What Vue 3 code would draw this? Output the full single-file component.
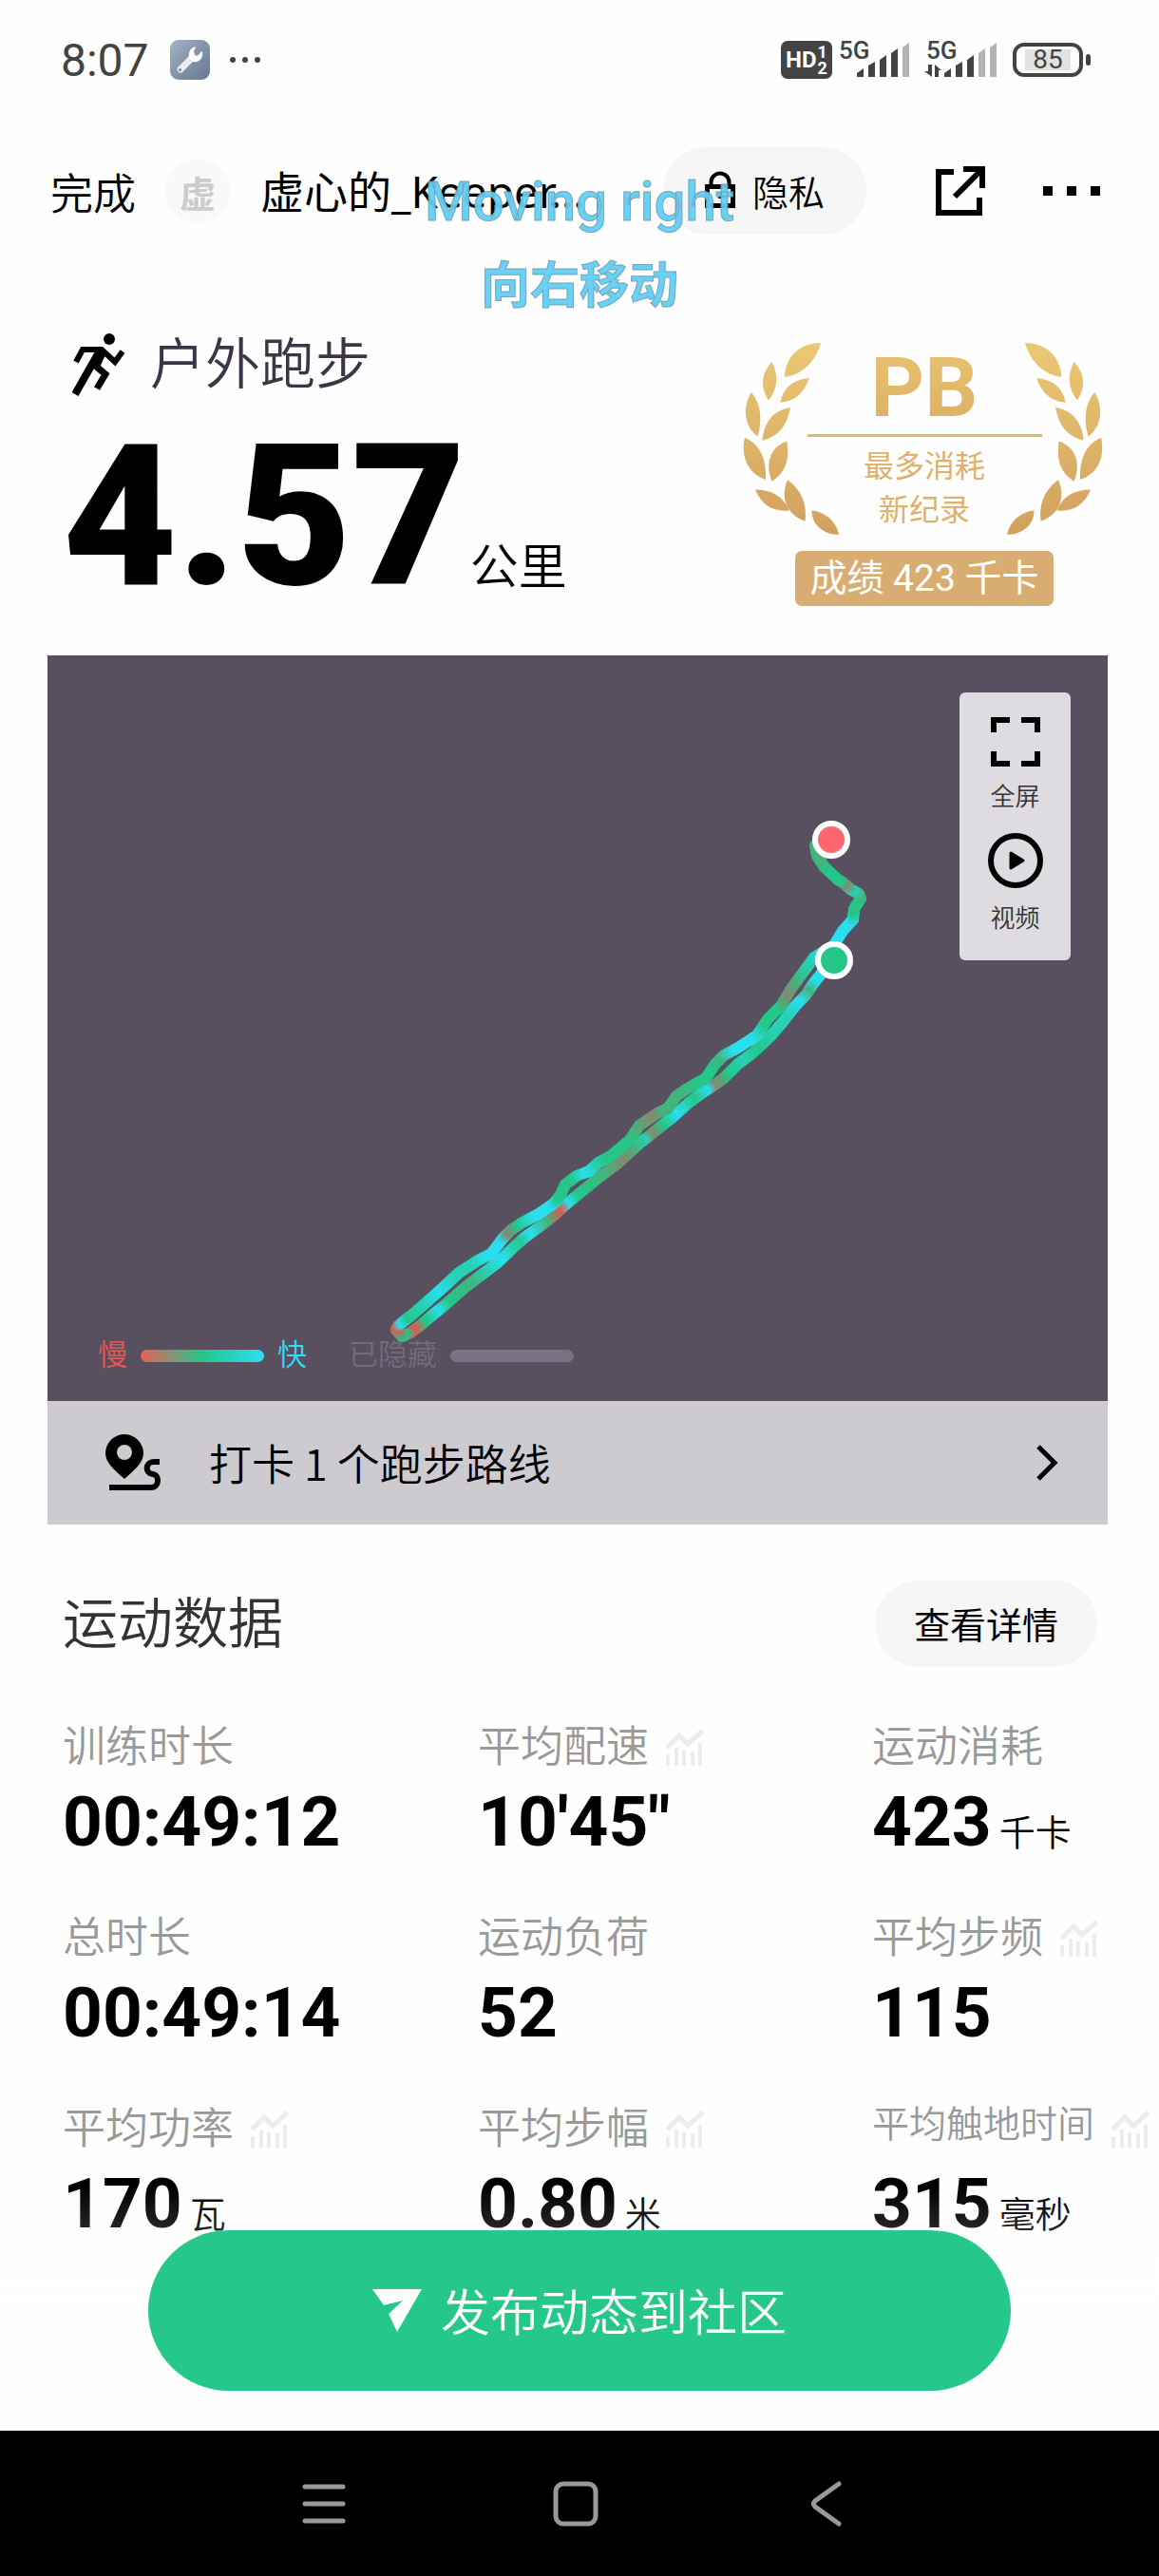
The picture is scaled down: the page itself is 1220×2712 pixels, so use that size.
<template>
  <div class="page">
    <div class="status">
      <div class="status-left">
        <span class="clock">8:07</span>
        <svg class="tool-icon" viewBox="0 0 42 42" width="42" height="42">
          <defs>
            <linearGradient id="toolBg" x1="0" y1="0" x2="1" y2="1">
              <stop offset="0" stop-color="#a3b2c4" />
              <stop offset="1" stop-color="#66788f" />
            </linearGradient>
          </defs>
          <rect width="42" height="42" rx="9" fill="url(#toolBg)" />
          <path d="M11 31L23 19" stroke="#e9edf1" stroke-width="7" stroke-linecap="round" />
          <path
            d="M27 7c-5 1-8 6-7 11 1 4 5 6 8 5 4-1 7-5 6-10l-1-1-4 5-3-1-1-4z"
            fill="#fff"
          />
          <circle cx="10.500" cy="31.500" r="1.500" fill="#71829a" />
        </svg>
        <svg viewBox="0 0 34 8" width="34" height="8" fill="#434343">
          <circle cx="4" cy="4" r="3" />
          <circle cx="17" cy="4" r="3" />
          <circle cx="30" cy="4" r="3" />
        </svg>
      </div>
      <div class="status-right">
        <div class="hd">
          <span>HD</span>
          <span class="hd-sims"><i>1</i><i>2</i></span>
        </div>
        <div v-for="sim in sims" :key="sim.id" class="signal">
          <span class="net">5G</span>
          <svg viewBox="0 0 78 40" width="78" height="40">
            <g v-if="sim.data" fill="#434343">
              <path d="M4 26h4v13L0 33h4zM11 39V26l7 6h-3v7z" />
            </g>
            <path
              v-for="(bar, i) in bars"
              :key="i"
              :d="bar"
              :fill="i < sim.level ? '#434343' : '#b3b3b3'"
            />
          </svg>
        </div>
        <div class="battery"><span>85</span></div>
      </div>
    </div>

    <header class="topbar">
      <button class="plain done">完成</button>
      <span class="avatar">虚</span>
      <span class="user">虚心的_Keeper...</span>
      <button class="privacy">
        <svg viewBox="0 0 32 40" width="32" height="40" fill="none" stroke="#000" stroke-width="5">
          <path d="M2.500 16.500h27v20h-27z" />
          <path d="M6.500 16v-4a9.500 9.500 0 0 1 19 0v4M16 22v7" stroke-width="4" />
        </svg>
        隐私
      </button>
      <button class="plain share" aria-label="分享">
        <svg viewBox="0 0 52 52" width="52" height="52" fill="none" stroke="#000" stroke-width="6">
          <path d="M19 6H3v43h43V33" />
          <path d="M29 3h20v20M48 4L20 32" />
        </svg>
      </button>
      <button class="plain more" aria-label="更多">
        <svg viewBox="0 0 60 10" width="60" height="10">
          <path d="M0 0h10v10H0zM25 0h10v10H25zM50 0h10v10H50z" />
        </svg>
      </button>
    </header>

    <div class="toast">
      <span class="toast-en">Moving right</span>
      <span class="toast-zh">向右移动</span>
    </div>

    <main>
      <section class="summary">
        <div>
          <h1>
            <svg viewBox="0 0 56 66" width="56" height="66" fill="none" stroke="#000" stroke-width="6">
              <circle cx="39" cy="6" r="6" fill="#000" stroke="none" />
              <path d="M4 30l7-13h20l14 13 8-11" />
              <path d="M28 20L3 64" stroke-width="8" />
              <path d="M32 17l-8 18" stroke-width="10" />
              <path d="M22 32l13 11-9 15" stroke-width="7" />
            </svg>
            户外跑步
          </h1>
          <p class="distance"><strong>4.57</strong><span>公里</span></p>
        </div>
        <div class="badge">
          <svg class="wreath" viewBox="0 0 1280 620" aria-hidden="true">
            <defs>
              <linearGradient id="gold" gradientUnits="userSpaceOnUse" x1="0" y1="60" x2="0" y2="680">
                <stop offset="0" stop-color="#ebc974" />
                <stop offset="1" stop-color="#d19f5f" />
              </linearGradient>
            </defs>
            <g transform="translate(0 -60)" fill="url(#gold)">
              <g><path v-for="leaf in leaves" :key="leaf" :d="leaf" /></g>
              <g transform="translate(1280 0) scale(-1 1)">
                <path v-for="leaf in leaves" :key="leaf" :d="leaf" />
              </g>
            </g>
          </svg>
          <div class="badge-text">
            <b>PB</b>
            <span>最多消耗</span>
            <span>新纪录</span>
          </div>
          <div class="record">成绩 423 千卡</div>
        </div>
      </section>

      <section class="map">
        <svg class="track" viewBox="0 0 1116 785">
          <g stroke-width="12" stroke-linecap="round">
            <line
              v-for="(s, i) in segments"
              :key="i"
              :x1="s.x1"
              :y1="s.y1"
              :x2="s.x2"
              :y2="s.y2"
              :stroke="s.color"
            />
          </g>
          <g stroke="#fff" stroke-width="6">
            <circle cx="825" cy="194" r="17" fill="#ff6670" />
            <circle cx="828" cy="321" r="17" fill="#24c789" />
          </g>
        </svg>
        <div class="map-tools">
          <button class="plain">
            <svg viewBox="0 0 52 52" width="52" height="52" fill="none" stroke="#000" stroke-width="6">
              <path d="M20 3H3v13M32 3h17v13M3 36v13h17M49 36v13H32" />
            </svg>
            全屏
          </button>
          <button class="plain">
            <svg viewBox="0 0 58 58" width="58" height="58">
              <circle cx="29" cy="29" r="26" fill="none" stroke="#000" stroke-width="6" />
              <path d="M24 21l13 8-13 8z" stroke="#000" stroke-width="3" stroke-linejoin="round" />
            </svg>
            视频
          </button>
        </div>
        <div class="legend">
          <span class="slow">慢</span>
          <i class="ramp"></i>
          <span class="fast">快</span>
          <span class="hidden">已隐藏</span>
          <i class="ramp off"></i>
        </div>
      </section>

      <a class="route" href="#">
        <svg viewBox="0 0 58 60" width="58" height="60">
          <path
            fill-rule="evenodd"
            d="M20 0C9 0 0 9 0 20c0 10 9 17 20 27 11-10 20-17 20-27C40 9 31 0 20 0zm0 11a8 8 0 1 1 0 16 8 8 0 0 1 0-16z"
          />
          <path
            d="M57 29h-6c-9 0-10 12-1 13 7 1 7 14-2 14H4"
            fill="none"
            stroke="#000"
            stroke-width="6"
          />
        </svg>
        <span>打卡 1 个跑步路线</span>
        <svg class="arrow" viewBox="0 0 24 40" width="24" height="40" fill="none" stroke="#000" stroke-width="5">
          <path d="M3 3l17 17L3 37" />
        </svg>
      </a>

      <section class="data">
        <div class="data-head">
          <h2>运动数据</h2>
          <button>查看详情</button>
        </div>
        <dl>
          <div v-for="item in stats" :key="item.label">
            <dt>
              <span :class="{ long: item.label.length > 4 }">{{ item.label }}</span>
              <svg v-if="item.chart" viewBox="0 0 40 40" width="40" height="40" fill="none" stroke="#ececec">
                <path d="M1 20L14 7l9 9L39 2" stroke-width="5" />
                <path d="M2 27v12M11 20v19M19 23v16M28 24v15M36 15v24" stroke-width="4" />
              </svg>
            </dt>
            <dd>{{ item.value }}<small v-if="item.unit">{{ item.unit }}</small></dd>
          </div>
        </dl>
      </section>
    </main>

    <footer class="dock">
      <div class="publish-wrap">
        <button class="publish">
          <svg viewBox="0 0 52 46" width="52" height="46" fill="#fff">
            <path d="M0 1h52L26 46l-9-19 15-14-20 5z" />
          </svg>
          发布动态到社区
        </button>
      </div>
      <nav>
        <button class="plain" aria-label="菜单">
          <svg viewBox="0 0 48 48" width="48" height="48">
            <path d="M4 6h40M4 24h40M4 42h40" />
          </svg>
        </button>
        <button class="plain" aria-label="主页">
          <svg viewBox="0 0 48 48" width="48" height="48">
            <rect x="3" y="3" width="42" height="42" rx="8" />
          </svg>
        </button>
        <button class="plain" aria-label="返回">
          <svg viewBox="0 0 48 48" width="48" height="48">
            <path d="M37 3L12 21q-3 3 0 6l25 18" />
          </svg>
        </button>
      </nav>
    </footer>
  </div>
</template>

<script setup>
const sims = [
  { id: 1, level: 4, data: false },
  { id: 2, level: 3, data: true }
]

const bars = [
  'M21 39v-4l7-5v9z',
  'M33 39V27l7-4v16z',
  'M45 39V21l7-5v23z',
  'M57 39V14l7-5v30z',
  'M69 39V8l7-5v36z'
]

const leaves = [
  'M318 66C250 66 206 110 203 174C262 165 300 125 318 66z',
  'M163 125C128 165 126 205 153 247C182 210 186 170 163 125z',
  'M281 178C235 180 200 205 190 254C235 252 265 225 281 178z',
  'M98 222C72 265 72 325 118 362C132 315 132 260 98 222z',
  'M222 270C170 278 138 315 133 374C185 360 210 330 222 270z',
  'M77 366C65 430 90 480 144 498C146 440 130 385 77 366z',
  'M211 376C155 395 142 450 163 503C212 470 218 430 211 376z',
  'M111 529C130 575 165 600 218 595C200 550 160 528 111 529z',
  'M213 498C190 550 205 605 268 629C275 570 255 530 213 498z',
  'M289 594C290 645 330 670 375 671C365 625 330 600 289 594z'
]

const stats = [
  { label: '训练时长', value: '00:49:12' },
  { label: '平均配速', value: '10′45″', chart: true },
  { label: '运动消耗', value: '423', unit: '千卡' },
  { label: '总时长', value: '00:49:14' },
  { label: '运动负荷', value: '52' },
  { label: '平均步频', value: '115', chart: true },
  { label: '平均功率', value: '170', unit: '瓦', chart: true },
  { label: '平均步幅', value: '0.80', unit: '米', chart: true },
  { label: '平均触地时间', value: '315', unit: '毫秒', chart: true }
]

// pace colours, slow to fast
const pace = {
  r: [226, 88, 80],
  b: [131, 138, 112],
  m: [68, 180, 125],
  g: [36, 199, 137],
  t: [40, 209, 180],
  c: [42, 222, 238]
}

const outbound = [
  [828, 321, 'c'], [817, 332, 'c'], [805, 347, 'c'], [798, 358, 'm'], [788, 368, 'c'],
  [773, 387, 't'], [760, 402, 't'], [743, 418, 'g'], [727, 430, 't'], [712, 445, 'g'],
  [698, 455, 'b'], [690, 460, 'c'], [675, 471, 'g'], [657, 487, 'c'], [643, 498, 'g'],
  [632, 507, 'b'], [625, 512, 't'], [613, 523, 'm'], [600, 535, 'b'], [580, 550, 'm'],
  [553, 572, 'g'], [543, 580, 'c'], [535, 588, 'r'], [520, 600, 'm'], [502, 613, 'c'],
  [492, 622, 'g'], [473, 640, 'c'], [457, 652, 't'], [440, 665, 'm'], [417, 685, 'g'],
  [407, 693, 'c'], [393, 705, 'g'], [382, 713, 'r'], [373, 717, 'g']
]

const inbound = [
  [373, 717, 'g'], [367, 710, 'b'], [369, 706, 'r'], [375, 701, 'c'], [383, 695, 'g'],
  [400, 680, 't'], [417, 665, 'c'], [433, 650, 't'], [453, 637, 't'], [467, 630, 'c'],
  [480, 613, 'c'], [488, 605, 'b'], [500, 597, 'g'], [517, 588, 'c'], [533, 577, 'c'],
  [540, 568, 'g'], [545, 557, 'g'], [557, 548, 'g'], [570, 543, 'c'], [580, 534, 't'],
  [593, 527, 'g'], [613, 510, 'g'], [623, 495, 'm'], [642, 482, 'b'], [653, 477, 'm'],
  [662, 464, 'm'], [672, 457, 'm'], [693, 445, 'g'], [703, 430, 'g'], [712, 421, 'm'],
  [727, 413, 'c'], [747, 400, 'c'], [758, 383, 'g'], [773, 368, 'g'], [782, 352, 'b'],
  [793, 337, 'm'], [807, 318, 't'], [828, 305, 'c'], [837, 290, 'c'], [848, 278, 'c'],
  [849, 267, 'g'], [856, 256, 'g'], [854, 251, 'm'], [845, 246, 't'], [837, 239, 'b'],
  [832, 236, 'g'], [818, 223, 'g'], [810, 211, 'm'], [808, 200, 'm']
]

const STEPS = 5

function colorize(points) {
  const out = []
  for (let i = 1; i < points.length; i++) {
    const [x1, y1, c1] = points[i - 1]
    const [x2, y2, c2] = points[i]
    for (let k = 0; k < STEPS; k++) {
      const a = k / STEPS
      const b = (k + 1) / STEPS
      const mix = pace[c1].map((v, n) => Math.round(v + (pace[c2][n] - v) * b))
      out.push({
        x1: x1 + (x2 - x1) * a,
        y1: y1 + (y2 - y1) * a,
        x2: x1 + (x2 - x1) * b,
        y2: y1 + (y2 - y1) * b,
        color: `rgb(${mix.join(',')})`
      })
    }
  }
  return out
}

const segments = [...colorize(outbound), ...colorize(inbound)]
</script>

<style>
body {
  margin: 0;
  background: #fefefe;
}
</style>

<style scoped>
.page {
  position: relative;
  min-height: 100vh;
  font-family: Roboto, "Noto Sans CJK SC", sans-serif;
  font-weight: 350;
  color: #000;
}

button {
  font: inherit;
  color: inherit;
  border: 0;
  margin: 0;
  cursor: pointer;
}

.plain {
  padding: 0;
  background: none;
}

svg {
  display: block;
  flex: none;
}

h1,
h2,
p,
dl,
dd {
  margin: 0;
  font-weight: inherit;
}

/* status bar */
.status {
  display: flex;
  justify-content: space-between;
  align-items: center;
  height: 126px;
  padding: 0 80px 0 64px;
  box-sizing: border-box;
  color: #434343;
}

.status-left,
.status-right {
  display: flex;
  align-items: center;
}

.clock {
  font-size: 48px;
  font-weight: 400;
}

.tool-icon {
  margin: 0 20px 0 22px;
}

.hd {
  display: flex;
  align-items: center;
  justify-content: center;
  gap: 1px;
  width: 54px;
  height: 40px;
  border-radius: 7px;
  background: #434343;
  color: #fff;
  font-size: 24px;
  font-weight: 700;
}

.hd-sims {
  display: flex;
  flex-direction: column;
  font-size: 18px;
  line-height: 17px;
}

.hd-sims i {
  font-style: normal;
}

.signal {
  position: relative;
  margin-left: 5px;
  padding-bottom: 2px;
}

.signal + .signal {
  margin-left: 14px;
}

.signal .net {
  position: absolute;
  left: 2px;
  top: -2px;
  font-size: 26px;
  line-height: 26px;
  font-weight: 500;
}

.battery {
  position: relative;
  margin-left: 15px;
  width: 74px;
  height: 36px;
  box-sizing: border-box;
  border: 4px solid #434343;
  border-radius: 12px;
  display: flex;
  align-items: center;
  justify-content: center;
  font-size: 28px;
  font-weight: 400;
}

.battery span {
  padding: 0 8px;
  line-height: 22px;
  background: #e2e2e2;
}

.battery::after {
  content: "";
  position: absolute;
  right: -12px;
  top: 8px;
  width: 5px;
  height: 12px;
  border-radius: 3px;
  background: #434343;
}

/* top bar */
.topbar {
  display: flex;
  align-items: center;
  height: 150px;
  padding: 0 62px 0 53px;
}

.done {
  font-size: 45px;
}

.avatar {
  display: grid;
  place-items: center;
  width: 68px;
  height: 68px;
  margin: 0 32px 0 31px;
  border-radius: 50%;
  background: #f9f9f9;
  color: #ccc;
  font-size: 38px;
  font-weight: 700;
}

.user {
  font-family: "Noto Sans", "Noto Sans CJK SC", sans-serif;
  font-size: 46px;
  line-height: 60px;
  font-weight: 400;
  white-space: nowrap;
}

.privacy {
  display: flex;
  align-items: center;
  justify-content: center;
  gap: 18px;
  width: 214px;
  height: 92px;
  padding: 0 0 2px;
  margin-left: auto;
  border-radius: 46px;
  background: #f6f6f6;
  font-size: 38px;
}

.share {
  margin: 0 61px 0 73px;
}

.toast {
  position: absolute;
  top: 168px;
  left: 0;
  right: 0;
  display: flex;
  flex-direction: column;
  align-items: center;
  color: #62cff5;
  font-weight: 500;
  opacity: 0.95;
  -webkit-text-stroke: 1px #6f9fb4;
  pointer-events: none;
}

.toast-en {
  font-size: 58px;
  line-height: 88px;
}

.toast-zh {
  font-size: 52px;
  line-height: 92px;
  font-weight: 700;
}

/* summary */
.summary {
  display: flex;
  justify-content: space-between;
  padding: 66px 58px 0 66px;
}

h1 {
  display: flex;
  align-items: center;
  gap: 26px;
  padding-left: 10px;
  font-size: 58px;
  line-height: 84px;
  color: #3d3545;
}

.distance {
  display: flex;
  align-items: baseline;
  gap: 4px;
  height: 230px;
  line-height: 236px;
}

.distance strong {
  font-size: 208px;
  font-weight: 900;
}

.distance span {
  font-size: 51px;
  line-height: 60px;
}

.badge {
  position: relative;
  display: flex;
  flex-direction: column;
  align-items: center;
  width: 378px;
  padding-top: 17px;
  color: #deb16d;
}

.wreath {
  position: absolute;
  top: 17px;
  left: -26px;
  width: 427px;
}

.badge-text {
  display: flex;
  flex-direction: column;
  align-items: center;
  font-size: 32px;
  line-height: 46px;
  font-weight: 400;
}

.badge-text b {
  width: 247px;
  margin-bottom: 8px;
  border-bottom: 3px solid #dfba67;
  text-align: center;
  font-size: 88px;
  line-height: 98px;
  font-weight: 700;
  background: linear-gradient(#e8c46f, #dcae67);
  -webkit-background-clip: text;
  background-clip: text;
  color: transparent;
}

.record {
  margin-top: 20px;
  padding: 0 15px;
  border-radius: 7px;
  background: #d9ad72;
  color: #fff;
  font-size: 39px;
  line-height: 58px;
  font-weight: 400;
}

/* map */
.map {
  position: relative;
  margin: 34px 54px 0 50px;
  background: #584f5f;
}

.track {
  width: 100%;
}

.map-tools {
  position: absolute;
  top: 39px;
  right: 39px;
  display: flex;
  flex-direction: column;
  gap: 18px;
  width: 117px;
  padding: 26px 0 24px;
  box-sizing: border-box;
  border-radius: 6px;
  background: #dedce0;
}

.map-tools button {
  display: flex;
  flex-direction: column;
  align-items: center;
  gap: 12px;
  font-size: 26px;
  line-height: 40px;
  color: #333;
}

.legend {
  position: absolute;
  left: 53px;
  bottom: 24px;
  display: flex;
  align-items: center;
  gap: 14px;
  font-size: 31px;
  line-height: 48px;
}

.slow {
  color: #e85555;
}

.fast {
  color: #35dcf5;
}

.hidden {
  margin-left: 30px;
  color: #746b7b;
}

.ramp {
  width: 130px;
  height: 13px;
  border-radius: 7px;
  background: linear-gradient(90deg, #ea5f58, #24c789 50%, #2fdcf7);
}

.ramp.off {
  background: #7a7182;
}

.route {
  display: flex;
  align-items: center;
  height: 130px;
  margin: 0 54px 0 50px;
  padding: 0 52px 0 61px;
  background: #cdcbd0;
  color: #000;
  font-family: "Noto Sans CJK SC", sans-serif;
  font-size: 45px;
  line-height: 60px;
  text-decoration: none;
}

.route span {
  margin-left: 51px;
}

.arrow {
  margin-left: auto;
}

/* data */
.data {
  padding: 59px 0 320px 66px;
}

.data-head {
  display: flex;
  align-items: center;
  justify-content: space-between;
  padding-right: 65px;
}

h2 {
  font-size: 58px;
  line-height: 84px;
  color: #333;
}

.data-head button {
  width: 234px;
  height: 91px;
  padding: 0 0 3px;
  border-radius: 46px;
  background: #f6f6f6;
  font-size: 38px;
  font-weight: 400;
}

dl {
  display: grid;
  grid-template-columns: 437fr 415fr 302fr;
  row-gap: 35px;
  margin-top: 49px;
}

dl > div {
  min-width: 0;
}

dt {
  display: flex;
  align-items: center;
  gap: 18px;
  height: 72px;
  font-size: 45px;
  line-height: 72px;
  color: #999;
  white-space: nowrap;
}

dt .long {
  align-self: flex-start;
  font-size: 39px;
  line-height: 62px;
}

dd {
  height: 94px;
  font-size: 73px;
  line-height: 84px;
  font-weight: 700;
}

dd small {
  margin-left: 8px;
  font-size: 38px;
  line-height: 40px;
  font-weight: 350;
}

/* bottom dock */
.dock {
  position: fixed;
  left: 0;
  right: 0;
  bottom: 0;
}

.publish-wrap {
  padding: 48px 156px 42px;
  background: linear-gradient(rgba(254, 254, 254, 0), rgba(254, 254, 254, 0.15) 48px, #fefefe 130px);
}

.publish {
  display: flex;
  align-items: center;
  justify-content: center;
  gap: 20px;
  width: 100%;
  height: 169px;
  padding: 0 0 2px;
  border-radius: 85px;
  background: #25c78b;
  color: #fff;
  font-size: 52px;
}

nav {
  display: flex;
  justify-content: space-between;
  align-items: center;
  height: 153px;
  padding: 0 326px 0 317px;
  background: #000;
}

nav svg {
  fill: none;
  stroke: #999;
  stroke-width: 5;
  stroke-linecap: round;
}
</style>
